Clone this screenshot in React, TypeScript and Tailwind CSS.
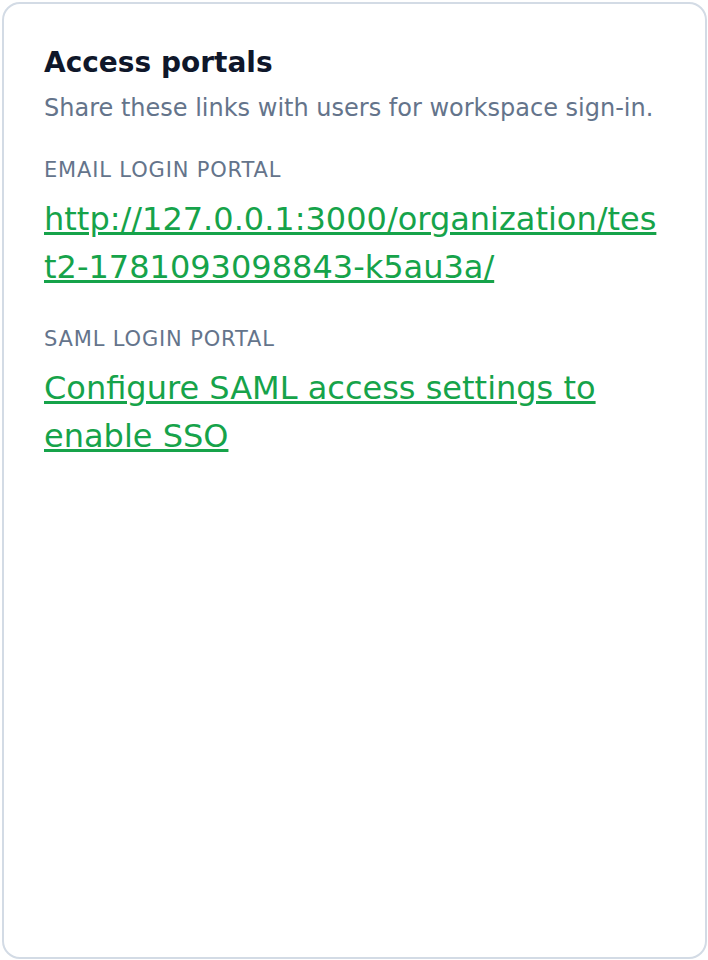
const portals = [
  {
    label: 'EMAIL LOGIN PORTAL',
    text: 'http://127.0.0.1:3000/organization/test2-1781093098843-k5au3a/',
    href: 'http://127.0.0.1:3000/organization/test2-1781093098843-k5au3a/',
    breakAll: true,
  },
  {
    label: 'SAML LOGIN PORTAL',
    text: 'Configure SAML access settings to enable SSO',
    href: '#saml',
    breakAll: false,
  },
]

export default function App() {
  return (
    <div className="w-[708px] h-[960px] pt-[2px] pl-[2px] pr-[1px] pb-[1px] bg-white font-['DejaVu_Sans',sans-serif]">
      <div className="h-full rounded-[18px] border-2 border-[#d3dbe5] bg-white px-[40px] pt-[41px]">
        <h2 className="text-[28px] leading-[35px] font-bold text-[#0f172a]">Access portals</h2>
        <p className="mt-[10px] text-[24px] leading-[36px] text-[#64748b]">
          Share these links with users for workspace sign-in.
        </p>

        <div className="mt-[29px] flex flex-col gap-[33px]">
          {portals.map((p) => (
            <div key={p.label}>
              <div className="text-[21px] leading-[30px] tracking-[0.04em] text-[#64748b]">{p.label}</div>
              <a
                href={p.href}
                className={`mt-[10px] block text-[32px] leading-[48px] text-[#16a34a] underline ${
                  p.breakAll ? 'break-all' : ''
                }`}
              >
                {p.text}
              </a>
            </div>
          ))}
        </div>
      </div>
    </div>
  )
}
